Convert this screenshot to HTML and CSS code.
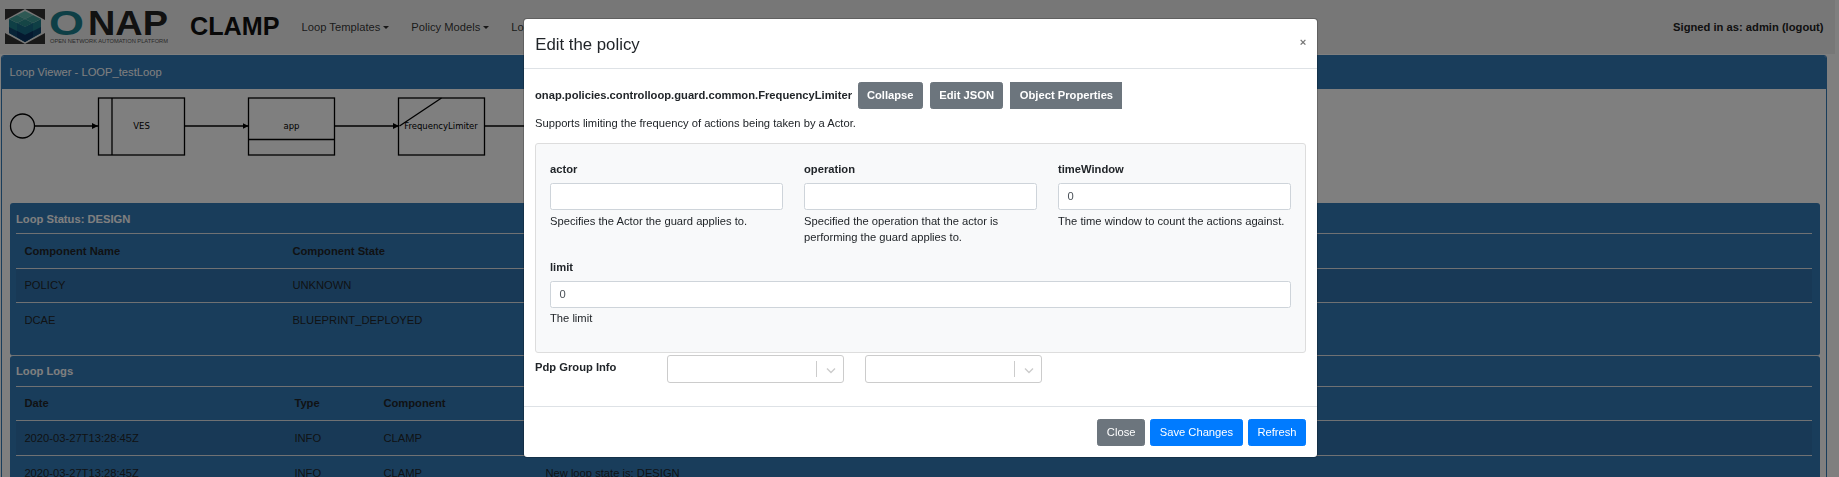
FILE: index.html
```html
<!DOCTYPE html>
<html lang="en">
<head>
  <meta charset="UTF-8">
  <title>CLAMP</title>
  <link rel="stylesheet" href="styles.css">
</head>
<body>
  <nav class="navbar">
    <svg class="logo" width="163" height="54" viewBox="0 0 163 54">
      <g transform="translate(0 8)">
        <rect x="0" y="1" width="40" height="35" fill="#333"/>
        <polygon points="20,1 40,12 40,25 20,36 0,25 0,12" fill="#efefef"/>
        <polygon points="4,11 20,19 36,11 36,25 20,34 4,25" fill="#1f7f8a"/>
        <polygon points="20,3 28,7 20,11 12,7" fill="#5db3a9"/>
        <polygon points="12,7 20,11 12,15 4,11" fill="#3f9d97"/>
        <polygon points="28,7 36,11 28,15 20,11" fill="#3f9d97"/>
        <polygon points="20,11 28,15 20,19 12,15" fill="#2b8a8c"/>
        <polygon points="12,15 20,19 28,15 28,23 20,27 12,23" fill="#176a86"/>
        <polygon points="4,19 20,27 36,19 36,25 20,34 4,25" fill="#10466f"/>
        <polygon points="12,23 20,27 28,23 28,29 20,34 12,29" fill="#0b3260"/>
        <text class="logo-name logo-o" x="44" y="27" textLength="35" lengthAdjust="spacingAndGlyphs">O</text>
        <text class="logo-name" x="83" y="27" textLength="80" lengthAdjust="spacingAndGlyphs">NAP</text>
        <text class="logo-tag" x="45" y="35" textLength="118" lengthAdjust="spacingAndGlyphs">OPEN NETWORK AUTOMATION PLATFORM</text>
      </g>
    </svg>
    <span class="brand">CLAMP</span>
    <ul class="nav-menu">
      <li class="nav-item">Loop Templates</li>
      <li class="nav-item">Policy Models</li>
      <li class="nav-item">Loop Instance</li>
    </ul>
    <span class="signed-in">Signed in as: admin (logout)</span>
  </nav>

  <div class="viewer-card">
    <div class="viewer-header">Loop Viewer - LOOP_testLoop</div>
    <svg class="loop-svg" width="1824" height="114" viewBox="0 0 1824 114">
      <defs>
        <marker id="arrow" markerUnits="userSpaceOnUse" markerWidth="6" markerHeight="6" refX="6" refY="3" orient="auto">
          <path d="M0 0L6 3L0 6z" fill="#000"/>
        </marker>
      </defs>
      <g class="shapes">
        <circle cx="20.5" cy="37" r="12"/>
        <line x1="32.5" y1="37" x2="96" y2="37" marker-end="url(#arrow)"/>
        <rect x="96.5" y="9" width="86" height="57"/>
        <line x1="110" y1="9" x2="110" y2="66"/>
        <line x1="182.5" y1="37" x2="246.5" y2="37" marker-end="url(#arrow)"/>
        <rect x="246.5" y="9" width="86" height="57"/>
        <line x1="246.5" y1="50.5" x2="332.5" y2="50.5"/>
        <line x1="332.5" y1="37" x2="397" y2="37" marker-end="url(#arrow)"/>
        <rect x="396.5" y="9" width="86" height="57"/>
        <line x1="397.5" y1="37" x2="439.5" y2="9"/>
        <line x1="482.5" y1="37" x2="560" y2="37"/>
      </g>
      <text class="shape-label" x="139.5" y="40">VES</text>
      <text class="shape-label" x="289.5" y="40">app</text>
      <text class="shape-label" x="439" y="40">FrequencyLimiter</text>
    </svg>

    <section class="inner-card status-card">
      <h3 class="inner-title">Loop Status: DESIGN</h3>
      <table class="data-table">
        <thead>
          <tr><th class="col-status">Component Name</th><th>Component State</th></tr>
        </thead>
        <tbody>
          <tr><td>POLICY</td><td>UNKNOWN</td></tr>
          <tr><td>DCAE</td><td>BLUEPRINT_DEPLOYED</td></tr>
        </tbody>
      </table>
    </section>

    <section class="inner-card logs-card">
      <h3 class="inner-title">Loop Logs</h3>
      <table class="data-table">
        <thead>
          <tr><th class="col-date">Date</th><th class="col-type">Type</th><th class="col-comp">Component</th><th>Log</th></tr>
        </thead>
        <tbody>
          <tr><td>2020-03-27T13:28:45Z</td><td>INFO</td><td>CLAMP</td><td>Operational and Config policies removed</td></tr>
          <tr><td>2020-03-27T13:28:45Z</td><td>INFO</td><td>CLAMP</td><td>New loop state is: DESIGN</td></tr>
        </tbody>
      </table>
    </section>
  </div>

  <div class="backdrop"></div>

  <div class="modal">
    <header class="modal-header">
      <h5 class="modal-title">Edit the policy</h5>
      <span class="modal-close">×</span>
    </header>
    <div class="modal-body">
      <div class="policy-head">
        <b class="policy-name">onap.policies.controlloop.guard.common.FrequencyLimiter</b>
        <button class="btn btn-grey btn-bold">Collapse</button>
        <button class="btn btn-grey btn-bold">Edit JSON</button>
        <button class="btn btn-grey btn-bold btn-square">Object Properties</button>
      </div>
      <p class="policy-desc">Supports limiting the frequency of actions being taken by a Actor.</p>

      <div class="policy-form">
        <div class="form-row">
          <div class="field">
            <label>actor</label>
            <input type="text">
            <small>Specifies the Actor the guard applies to.</small>
          </div>
          <div class="field">
            <label>operation</label>
            <input type="text">
            <small>Specified the operation that the actor is performing the guard applies to.</small>
          </div>
          <div class="field">
            <label>timeWindow</label>
            <input type="text" value="0">
            <small>The time window to count the actions against.</small>
          </div>
        </div>
        <div class="field field-wide">
          <label>limit</label>
          <input type="text" value="0">
          <small>The limit</small>
        </div>
      </div>

      <div class="pdp-row">
        <b class="pdp-label">Pdp Group Info</b>
        <div class="select-box">
          <span class="select-sep"></span>
          <svg width="20" height="20" viewBox="0 0 20 20"><path d="M6 9.5L10 13.5L14 9.5" fill="none" stroke="#ccc" stroke-width="1.4"/></svg>
        </div>
        <div class="select-box">
          <span class="select-sep"></span>
          <svg width="20" height="20" viewBox="0 0 20 20"><path d="M6 9.5L10 13.5L14 9.5" fill="none" stroke="#ccc" stroke-width="1.4"/></svg>
        </div>
      </div>
    </div>
    <footer class="modal-footer">
      <button class="btn btn-grey">Close</button>
      <button class="btn btn-blue">Save Changes</button>
      <button class="btn btn-blue">Refresh</button>
    </footer>
  </div>
</body>
</html>
```

FILE: styles.css
```css
* {
  box-sizing: border-box;
}
html {
  font-size: 11.2px;
}
body {
  margin: 0;
  height: 477px;
  overflow: hidden;
  font-family: "Liberation Sans", Arial, sans-serif;
  font-size: 11.2px;
  line-height: 1.5;
  color: #212529;
  background-color: #fff;
}
.navbar {
  display: flex;
  align-items: center;
  height: 54px;
  margin-right: 4px;
  padding: 0 11.5px 0 5px;
  background-color: #efefef;
}
.logo {
  flex: none;
}
.logo-name {
  font-family: "Liberation Sans", Arial, sans-serif;
  font-size: 35px;
  font-weight: 700;
  fill: #222;
}
.logo-o {
  fill: #1d7f8c;
}
.logo-tag {
  font-family: "Liberation Sans", Arial, sans-serif;
  font-size: 5px;
  fill: #555;
}
.brand {
  margin-left: 22px;
  font-size: 25.2px;
  font-weight: 700;
  color: #111;
}
.nav-menu {
  display: flex;
  gap: 22px;
  margin: 0 0 0 22px;
  padding: 0;
  list-style: none;
  color: rgba(0, 0, 0, .8);
}
.nav-item::after {
  content: "";
  display: inline-block;
  margin-left: 3px;
  vertical-align: 2px;
  border-top: 3px solid;
  border-left: 3px solid transparent;
  border-right: 3px solid transparent;
}
.signed-in {
  margin-left: auto;
  font-weight: 700;
  color: #222;
}

.viewer-card {
  margin: 1px 12px 0 1px;
  height: 430px;
  border: 1px solid #337ab7;
  border-radius: 3px;
  background-color: #fff;
}
.viewer-header {
  height: 33px;
  padding: 0 7.5px;
  line-height: 32px;
  color: #fff;
  background-color: #337ab7;
  border-radius: 2px 2px 0 0;
}
.loop-svg {
  display: block;
}
.shapes circle,
.shapes rect,
.shapes line {
  fill: none;
  stroke: #000;
  stroke-width: 1.3px;
}
.shape-label {
  font-family: "DejaVu Sans", sans-serif;
  font-size: 8.5px;
  text-anchor: middle;
  fill: #000;
}
.inner-card {
  margin: 0 6px 0 7.5px;
  padding: 7px 8.5px 0 6.5px;
  background-color: #337ab7;
  border-radius: 3px;
}
.status-card {
  height: 153px;
  border-bottom: 1px solid #dee2e6;
}
.status-card .inner-title {
  margin-bottom: 1px;
  padding-top: 1px;
}
.inner-title {
  margin: 0;
  height: 24px;
  font-size: 11.2px;
  font-weight: 700;
  color: #fff;
  border-bottom: 1px solid #dee2e6;
}
.data-table {
  width: 100%;
  border-collapse: separate;
  border-spacing: 0;
  table-layout: fixed;
}
.data-table th,
.data-table td {
  height: 34px;
  padding: 0 8.4px;
  text-align: left;
  font-weight: 400;
  border-bottom: 1px solid #dee2e6;
}
.data-table th {
  font-weight: 700;
}
.status-card tbody tr:last-child td {
  border-bottom: 0;
}
.logs-card td {
  height: 35px;
}
.data-table tbody tr:nth-child(odd) {
  background-color: rgba(0, 0, 0, .05);
}
.col-status {
  width: 268px;
}
.col-date {
  width: 270px;
}
.col-type {
  width: 89px;
}
.col-comp {
  width: 162px;
}

.backdrop {
  position: fixed;
  inset: 0;
  background-color: rgba(0, 0, 0, .5);
}
.modal {
  position: fixed;
  left: 523px;
  top: 18px;
  width: 795px;
  height: 440px;
  display: flex;
  flex-direction: column;
  background-color: #fff;
  border: 1px solid rgba(0, 0, 0, .2);
  border-radius: 4px;
  background-clip: padding-box;
}
.modal-header {
  display: flex;
  justify-content: space-between;
  align-items: flex-start;
  padding: 13px 11.2px 10.4px;
  border-bottom: 1px solid #dee2e6;
}
.modal-title {
  margin: 0;
  font-size: 16.8px;
  font-weight: 400;
  line-height: 1.5;
}
.modal-close {
  margin-right: -.5px;
  font-size: 11.2px;
  line-height: 20px;
  font-weight: 700;
  color: #777;
}
.modal-body {
  flex: 1;
  padding: 13px 11px 0 11px;
}
.policy-head {
  display: flex;
  align-items: center;
  gap: 7px;
}
.policy-name {
  margin-right: -1.5px;
}
.btn {
  height: 27px;
  padding: 0 8.4px;
  font-family: inherit;
  font-size: 11.2px;
  line-height: 25px;
  color: #fff;
  border: 1px solid transparent;
  border-radius: 2.5px;
}
.btn-bold {
  font-weight: 700;
}
.btn-square {
  border-radius: 0;
}
.btn-grey {
  background-color: #6c757d;
  border-color: #6c757d;
}
.btn-blue {
  background-color: #007bff;
  border-color: #007bff;
}
.policy-desc {
  margin: 6px 0 0;
  line-height: 17px;
}
.policy-form {
  height: 210px;
  margin-top: 11px;
  padding: 16px 14px 0;
  background-color: #f8f9fa;
  border: 1px solid #ddd;
  border-radius: 3px;
}
.form-row {
  display: grid;
  grid-template-columns: repeat(3, 232.5px);
  column-gap: 21.5px;
}
.field label {
  display: block;
  height: 18px;
  margin-bottom: 5px;
  line-height: 18px;
  font-weight: 700;
}
.field input {
  display: block;
  width: 100%;
  height: 27px;
  padding: 0 8.4px;
  font-family: inherit;
  font-size: 11.2px;
  color: #495057;
  background-color: #fff;
  border: 1px solid #ced4da;
  border-radius: 2.5px;
}
.field small {
  display: block;
  margin-top: 3px;
  font-size: 11.2px;
  line-height: 16px;
}
.field-wide {
  margin-top: 13px;
}
.field-wide small {
  margin-top: 2px;
}
.pdp-row {
  display: flex;
  align-items: flex-start;
  margin-top: 2px;
}
.pdp-label {
  width: 132px;
  line-height: 24px;
}
.select-box {
  display: flex;
  justify-content: flex-end;
  align-items: center;
  width: 176.5px;
  height: 28px;
  margin-right: 21.5px;
  padding-right: 1.5px;
  background-color: #fff;
  border: 1px solid #ccc;
  border-radius: 3px;
}
.select-sep {
  width: 1px;
  height: 16px;
  margin-right: 4.5px;
  background-color: #ccc;
}
.modal-footer {
  display: flex;
  justify-content: flex-end;
  gap: 5.5px;
  height: 51px;
  padding: 12px 11px 0 0;
  border-top: 1px solid #dee2e6;
}
```
